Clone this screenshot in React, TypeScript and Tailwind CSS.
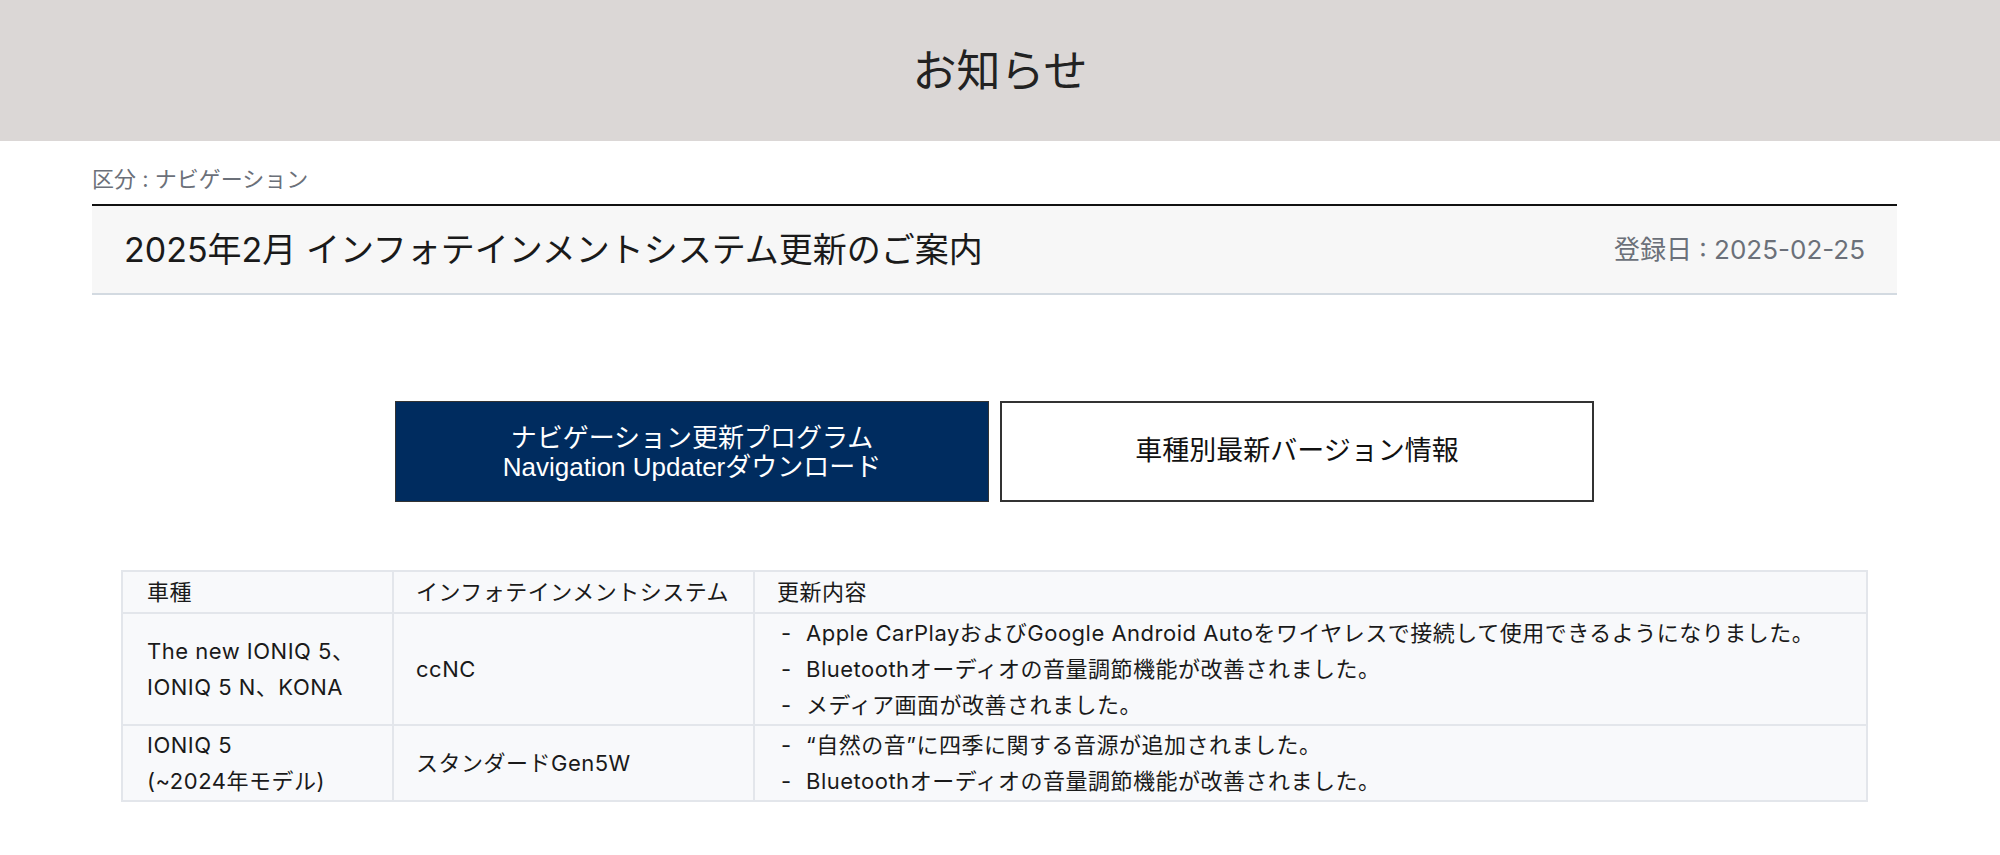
import React from "react";

const jp = { fontFamily: 'Inter, "Noto Sans CJK JP", sans-serif' };
const arial = { fontFamily: '"Liberation Sans", "Noto Sans CJK JP", sans-serif' };

const rows = [
  {
    car: ["The new IONIQ 5、", "IONIQ 5 N、KONA"],
    sys: "ccNC",
    items: [
      "Apple CarPlayおよびGoogle Android Autoをワイヤレスで接続して使用できるようになりました。",
      "Bluetoothオーディオの音量調節機能が改善されました。",
      "メディア画面が改善されました。",
    ],
  },
  {
    car: ["IONIQ 5", "(~2024年モデル)"],
    sys: "スタンダードGen5W",
    items: [
      "“自然の音”に四季に関する音源が追加されました。",
      "Bluetoothオーディオの音量調節機能が改善されました。",
    ],
  },
];

export default function App() {
  return (
    <div className="w-[2000px] min-h-[855px] bg-white" style={jp}>
      <header className="h-[141px] bg-[#dbd7d6] flex items-center justify-center">
        <h1 className="text-[44px] leading-none text-[#222222] font-normal">お知らせ</h1>
      </header>

      <main className="ml-[92px] w-[1805px]">
        <div className="pt-[23px] pb-[10px] text-[22px] leading-[30px] text-[#6b7079]">
          区分 : ナビゲーション
        </div>

        <div className="h-[91px] bg-[#f7f7f7] border-t-2 border-[#111111] border-b-2 border-b-[#d3dae1] flex items-center justify-between pl-[32px] pr-[32px]">
          <h2 className="text-[34px] leading-none text-[#1a1a1a] font-normal">
            2025年2月 インフォテインメントシステム更新のご案内
          </h2>
          <span className="text-[26px] leading-none text-[#6b7079]">登録日 : 2025-02-25</span>
        </div>

        <div className="mt-[106px] flex justify-center gap-[11px]" style={arial}>
          <button className="w-[594px] h-[101px] bg-[#002c5f] border border-[#333333] text-white text-[26px] leading-[29px] flex flex-col items-center justify-center pt-[2px]">
            <span>ナビゲーション更新プログラム</span>
            <span>Navigation Updaterダウンロード</span>
          </button>
          <button className="w-[594px] h-[101px] bg-white border-2 border-[#333333] text-[#111111] text-[27px] leading-none flex items-center justify-center">
            車種別最新バージョン情報
          </button>
        </div>

        <div className="mt-[68px] mx-[29px]">
          <table className="w-full border-collapse bg-[#f8f9fb] text-[22px] leading-[36px] tracking-[0.5px] text-[#1a1a1a]">
            <colgroup>
              <col className="w-[271px]" />
              <col className="w-[361px]" />
              <col />
            </colgroup>
            <thead>
              <tr>
                <th className="border-2 border-[#e3e6eb] px-[24px] py-[2px] text-left font-normal">車種</th>
                <th className="border-2 border-[#e3e6eb] px-[22px] py-[2px] text-left font-normal">インフォテインメントシステム</th>
                <th className="border-2 border-[#e3e6eb] px-[22px] py-[2px] text-left font-normal">更新内容</th>
              </tr>
            </thead>
            <tbody>
              {rows.map((r, i) => (
                <tr key={i}>
                  <td className="border-2 border-[#e3e6eb] px-[24px] py-[1px] align-middle">
                    {r.car.map((c, j) => (
                      <div key={j}>{c}</div>
                    ))}
                  </td>
                  <td className="border-2 border-[#e3e6eb] px-[22px] py-[1px] align-middle">{r.sys}</td>
                  <td className="border-2 border-[#e3e6eb] px-[26px] py-[1px] align-middle">
                    {r.items.map((it, j) => (
                      <div key={j} className="flex">
                        <span className="w-[25px] shrink-0">-</span>
                        <span>{it}</span>
                      </div>
                    ))}
                  </td>
                </tr>
              ))}
            </tbody>
          </table>
        </div>
      </main>
    </div>
  );
}
